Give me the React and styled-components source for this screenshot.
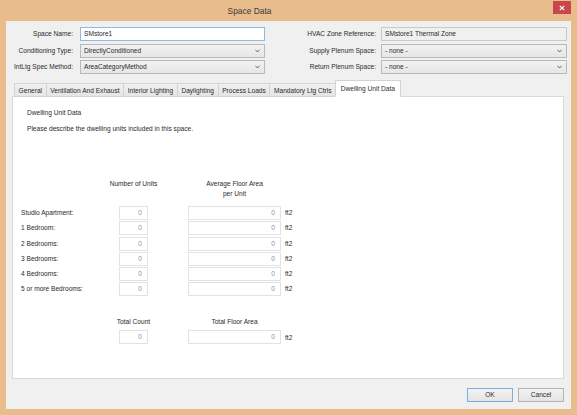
import React from 'react'
import styled, { createGlobalStyle } from 'styled-components'

const Global = createGlobalStyle`
    html, body {
        margin: 0;
        padding: 0;
        height: 100%;
        overflow: hidden;
    }
    body {
        font-family: "Liberation Sans", Arial, sans-serif;
        font-size: 6.6px;
        color: #2a2a2a;
    }
    #root {
        height: 100%;
    }
`

const Frame = styled.div`
    display: flex;
    flex-direction: column;
    height: 415px;
    width: 577px;
    background-color: #e9bd8b;
    box-sizing: border-box;
`
const TitleBar = styled.div`
    display: flex;
    align-items: flex-start;
    height: 21px;
    flex-shrink: 0;
`
const Title = styled.div`
    flex: 1;
    text-align: center;
    font-size: 8.4px;
    line-height: 22px;
    color: #3a3a3a;
    padding-left: 6px;
    padding-right: 60px;
`
const CloseButton = styled.div`
    width: 18px;
    height: 13px;
    margin-top: 1px;
    margin-right: 6px;
    background-color: #c9464b;
    display: flex;
    align-items: center;
    justify-content: center;
`
const Body = styled.div`
    flex: 1;
    display: flex;
    flex-direction: column;
    margin: 0 6px 6px 6px;
    background-color: #f0f0f0;
    padding-top: 6px;
    min-height: 0;
`
const Form = styled.div`
    display: grid;
    grid-template-columns: 74px 185px 116px 186px;
    grid-auto-rows: 14px;
    row-gap: 2.5px;
`
const Label = styled.div`
    text-align: right;
    padding-right: ${p => p.$pad || 7}px;
    line-height: 14px;
    white-space: nowrap;
`
const TextBox = styled.div`
    box-sizing: border-box;
    border: 1px solid ${p => p.$focus ? '#8dbbe8' : '#c9c9c9'};
    background-color: ${p => p.$disabled ? '#f0f0f0' : '#ffffff'};
    line-height: 12px;
    padding-left: 3px;
    white-space: nowrap;
`
const Combo = styled.div`
    box-sizing: border-box;
    display: flex;
    align-items: center;
    justify-content: space-between;
    border: 1px solid #b9b9b9;
    background: linear-gradient(#f2f2f2, #e6e6e6);
    line-height: 12px;
    padding: 0 4px 0 3px;
    white-space: nowrap;
`
const TabStrip = styled.div`
    display: flex;
    align-items: flex-end;
    height: 17px;
    margin: 6px 0 -1px 8px;
    position: relative;
    z-index: 1;
`
const Tab = styled.div`
    box-sizing: border-box;
    height: ${p => p.$active ? 17 : 14}px;
    line-height: ${p => p.$active ? 15 : 13}px;
    padding: 0 ${p => p.$active ? 4.6 : 3.6}px;
    margin-left: ${p => p.$active ? -1 : 0}px;
    border: 1px solid #d3d3d3;
    border-left-width: ${p => p.$first || p.$active ? 1 : 0}px;
    border-bottom-color: ${p => p.$active ? '#ffffff' : '#d3d3d3'};
    background: ${p => p.$active ? '#ffffff' : 'linear-gradient(#f0f0f0, #e5e5e5)'};
    white-space: nowrap;
`
const Panel = styled.div`
    flex: 1;
    margin: 0 7px 0 6px;
    border: 1px solid #d9d9d9;
    background-color: #ffffff;
    padding: 11px 0 0 14px;
    display: flex;
    flex-direction: column;
`
const Note = styled.div`
    line-height: 9px;
    margin-bottom: ${p => p.$gap || 0}px;
`
const Units = styled.div`
    display: grid;
    grid-template-columns: 98px 29px 40px 93px auto;
    margin-left: -6px;
    margin-top: 46px;
`
const Head = styled.div`
    grid-column: ${p => p.$col};
    text-align: center;
    line-height: 10px;
    white-space: nowrap;
    display: flex;
    flex-direction: column;
    align-items: center;
    justify-self: center;
    margin-top: ${p => p.$top || 0}px;
    margin-bottom: ${p => p.$gap || 7}px;
`
const RowLabel = styled.div`
    grid-column: 1;
    line-height: 14px;
    margin-bottom: 1.3px;
    white-space: nowrap;
`
const NumBox = styled.div`
    grid-column: ${p => p.$col};
    box-sizing: border-box;
    height: 14px;
    border: 1px solid #e2e2e2;
    color: #8f8f8f;
    text-align: right;
    padding-right: 5px;
    line-height: 12px;
    margin-bottom: 1.3px;
`
const Unit = styled.div`
    grid-column: 5;
    padding-left: 4px;
    line-height: ${p => p.$lh || 14}px;
    margin-top: ${p => p.$top || 0}px;
`
const Footer = styled.div`
    height: 30px;
    flex-shrink: 0;
    display: flex;
    justify-content: flex-end;
    align-items: flex-start;
    gap: 5px;
    padding: 9px 7px 0 0;
    box-sizing: border-box;
`
const Button = styled.div`
    box-sizing: border-box;
    width: ${p => p.$w}px;
    height: 14px;
    line-height: 12px;
    text-align: center;
    border: 1px solid ${p => p.$default ? '#7eaedc' : '#b3b3b3'};
    background: linear-gradient(#f3f3f3, #e4e4e4);
`

const Chevron = () => (
    <svg width="5" height="4" viewBox="0 0 5 4">
        <path d="M0.5 0.8 L2.5 3 L4.5 0.8" fill="none" stroke="#555" strokeWidth="0.9" />
    </svg>
)

const tabs = ['General', 'Ventilation And Exhaust', 'Interior Lighting', 'Daylighting', 'Process Loads', 'Mandatory Ltg Ctrls', 'Dwelling Unit Data']
const rows = ['Studio Apartment:', '1 Bedroom:', '2 Bedrooms:', '3 Bedrooms:', '4 Bedrooms:', '5 or more Bedrooms:']

export default function App() {
    return (
        <Frame>
            <Global />
            <TitleBar>
                <Title>Space Data</Title>
                <CloseButton>
                    <svg width="6" height="6" viewBox="0 0 6 6">
                        <path d="M0.8 0.8 L5.2 5.2 M5.2 0.8 L0.8 5.2" stroke="#fff" strokeWidth="1.2" />
                    </svg>
                </CloseButton>
            </TitleBar>
            <Body>
                <Form>
                    <Label>Space Name:</Label>
                    <TextBox $focus>SMstore1</TextBox>
                    <Label $pad={5}>HVAC Zone Reference:</Label>
                    <TextBox $disabled>SMstore1 Thermal Zone</TextBox>

                    <Label>Conditioning Type:</Label>
                    <Combo>DirectlyConditioned<Chevron /></Combo>
                    <Label $pad={5}>Supply Plenum Space:</Label>
                    <Combo>- none -<Chevron /></Combo>

                    <Label>IntLtg Spec Method:</Label>
                    <Combo>AreaCategoryMethod<Chevron /></Combo>
                    <Label $pad={5}>Return Plenum Space:</Label>
                    <Combo>- none -<Chevron /></Combo>
                </Form>
                <TabStrip>
                    {tabs.map((t, i) => (
                        <Tab key={t} $first={i === 0} $active={i === tabs.length - 1}>{t}</Tab>
                    ))}
                </TabStrip>
                <Panel>
                    <Note $gap={7}>Dwelling Unit Data</Note>
                    <Note>Please describe the dwelling units included in this space.</Note>
                    <Units>
                        <Head $col={2}>Number of Units</Head>
                        <Head $col={4}>
                            <span>Average Floor Area</span>
                            <span>per Unit</span>
                        </Head>
                        {rows.map(r => (
                            <React.Fragment key={r}>
                                <RowLabel>{r}</RowLabel>
                                <NumBox $col={2}>0</NumBox>
                                <NumBox $col={4}>0</NumBox>
                                <Unit>ft2</Unit>
                            </React.Fragment>
                        ))}
                        <Head $col={2} $gap={3} $top={19}>Total Count</Head>
                        <Head $col={4} $gap={3} $top={19}>Total Floor Area</Head>
                        <NumBox $col={2}>0</NumBox>
                        <NumBox $col={4}>0</NumBox>
                        <Unit $lh={12} $top={2}>ft2</Unit>
                    </Units>
                </Panel>
                <Footer>
                    <Button $w={46} $default>OK</Button>
                    <Button $w={46}>Cancel</Button>
                </Footer>
            </Body>
        </Frame>
    )
}
